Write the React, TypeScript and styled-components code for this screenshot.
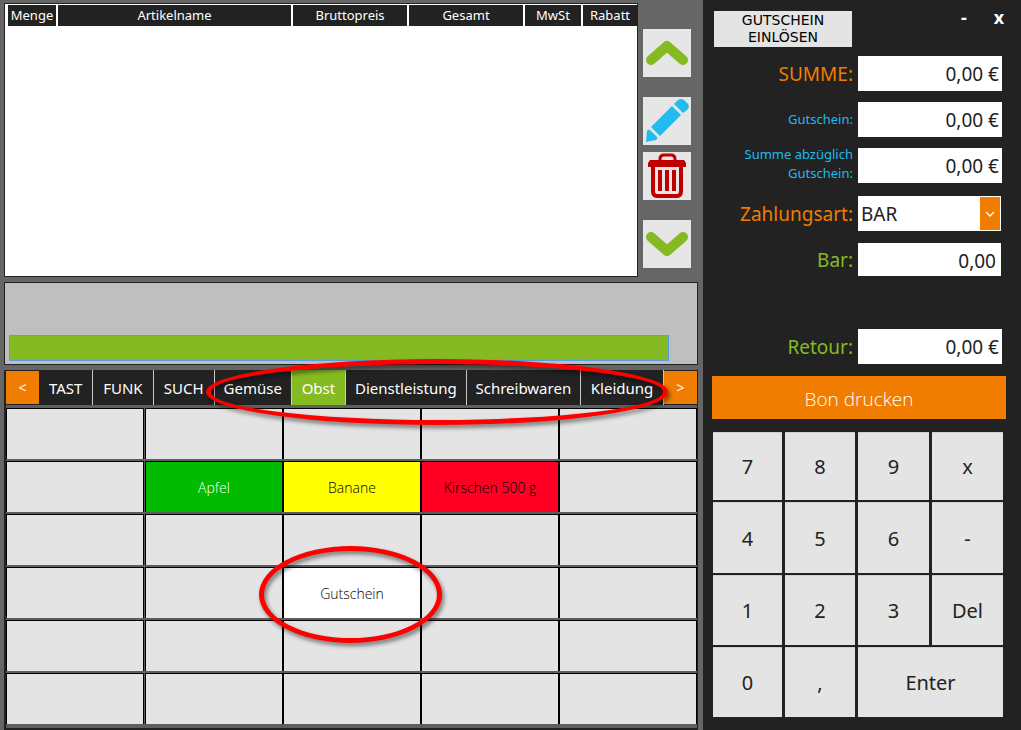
import React from "react";
import styled, { createGlobalStyle } from "styled-components";

const colors = {
  dark: "#222222",
  frame: "#666666",
  tile: "#e4e4e4",
  orange: "#f07d00",
  green: "#86ba22",
  blue: "#1cbbee",
  red: "#be0000",
};

const GlobalStyle = createGlobalStyle`
  *, *::before, *::after { box-sizing: border-box; }
  body { margin: 0; background: ${colors.dark}; }
  body, button, input, select {
    font-family: "Noto Sans", "Open Sans", sans-serif;
  }
  button, input, select { border: 0; border-radius: 0; margin: 0; padding: 0; }
  button { cursor: pointer; }
`;

const Register = styled.main`
  display: flex;
  min-height: 100vh;
  overflow: hidden;
`;

/* Left side: receipt, scan bar and article pad */

const SalesPane = styled.section`
  flex: 1;
  min-width: 0;
  display: flex;
  flex-direction: column;
  gap: 5px;
  padding: 3px 5px 0 4px;
  background: ${colors.frame};
`;

const ReceiptRow = styled.div`
  flex: 1;
  display: flex;
  gap: 5px;
  padding-right: 7px;
`;

const Receipt = styled.div`
  flex: 1;
  min-width: 0;
  min-height: 273px;
  padding: 1px 0 0 3px;
  background: #fff;
  border: 1px solid ${colors.dark};
`;

const ReceiptTable = styled.table`
  width: 100%;
  table-layout: fixed;
  border-spacing: 0;
`;

const ColumnHead = styled.th<{ $width?: number }>`
  width: ${(p) => (p.$width ? `${p.$width}px` : "auto")};
  height: 21px;
  padding: 0;
  border-right: 2px solid #fff;
  background: ${colors.dark};
  background-clip: padding-box;
  color: #fff;
  font-size: 13px;
  font-weight: 400;
  line-height: 21px;
  white-space: nowrap;
  &:last-child { border-right: 0; }
`;

const ToolColumn = styled.div`
  display: flex;
  flex-direction: column;
  padding-top: 26px;
`;

const ToolButton = styled.button<{ $gap?: number }>`
  width: 48px;
  height: 48px;
  margin-bottom: ${(p) => p.$gap ?? 0}px;
  background: #e6e6e6;
  svg { display: block; }
`;

const ScanPanel = styled.div`
  height: 83px;
  display: flex;
  align-items: flex-end;
  padding: 0 28px 3px 4px;
  background: #bfbfbf;
  border: 1px solid ${colors.dark};
`;

const ScanInput = styled.input`
  width: 100%;
  height: 26px;
  background: ${colors.green};
  border: 1px solid #569de5;
  outline: 0;
`;

const ArticlePad = styled.div`
  position: relative;
  border-left: 2px solid ${colors.dark};
  border-right: 1px solid ${colors.dark};
  border-bottom: 2px solid ${colors.dark};
`;

const TabBar = styled.nav`
  display: flex;
  height: 35px;
  background: ${colors.dark};
`;

const ScrollButton = styled.button`
  width: 33px;
  height: 33px;
  margin-top: 1px;
  background: ${colors.orange};
  color: #fff;
  font-size: 14px;
`;

const Tab = styled.button<{ $active?: boolean; $grow: number }>`
  flex: ${(p) => p.$grow} 1 0;
  min-width: 0;
  background: ${(p) => (p.$active ? colors.green : colors.dark)};
  border-right: 1px solid #c8c8c8;
  color: #fff;
  font-size: 15px;
  white-space: nowrap;
`;

const ArticleGrid = styled.div`
  display: grid;
  grid-template-columns: 139fr 138fr 138fr 138fr 138fr;
  grid-auto-rows: 51px;
  row-gap: 2px;
  padding: 3px 0 4px;
  background: #5e5e5e;
`;

const Article = styled.button<{ $bg?: string; $fg?: string }>`
  position: relative;
  background: ${(p) => p.$bg ?? colors.tile};
  border: solid #000;
  border-width: 1px 1px 0;
  color: ${(p) => p.$fg ?? "#000"};
  font-family: "Open Sans", "Noto Sans", sans-serif;
  font-size: 14px;
  font-weight: 300;
  &:nth-child(5n + 1) { margin-right: 1px; }
`;

const Marker = styled.span`
  position: absolute;
  z-index: 1;
  border: 5px solid #f00;
  border-radius: 50%;
  filter: drop-shadow(2px 3px 2px rgba(0, 0, 0, 0.5));
  pointer-events: none;
`;

const TabMarker = styled(Marker)`
  top: -11px;
  left: 200px;
  right: 29px;
  height: 66px;
`;

const ArticleMarker = styled(Marker)`
  inset: -22px -22px -25px -25px;
`;

/* Right side: totals and keypad */

const PaymentPane = styled.aside`
  width: 318px;
  display: flex;
  flex-direction: column;
  padding: 11px 15px 13px 9px;
  background: ${colors.dark};
`;

const TopBar = styled.header`
  display: flex;
  justify-content: space-between;
  align-items: flex-start;
  padding-left: 2px;
`;

const VoucherButton = styled.button`
  width: 138px;
  height: 36px;
  background: ${colors.tile};
  color: #000;
  font-family: "DejaVu Sans", sans-serif;
  font-size: 14px;
  line-height: 17px;
`;

const WindowControls = styled.div`
  display: flex;
  gap: 15px;
  margin-right: -3px;
`;

const WindowButton = styled.button`
  width: 20px;
  height: 12px;
  background: none;
  color: #fff;
  font-size: 18px;
  font-weight: 700;
  line-height: 10px;
`;

const Totals = styled.form`
  display: flex;
  flex-direction: column;
  gap: 11px;
  padding: 9px 4px 12px 0;
`;

const FieldRow = styled.div<{ $space?: number }>`
  display: flex;
  align-items: center;
  gap: 5px;
  height: 35px;
  margin-top: ${(p) => p.$space ?? 0}px;
`;

const FieldLabel = styled.label<{ $color: string; $small?: boolean }>`
  flex: 1;
  padding-top: ${(p) => (p.$small ? 0 : 2)}px;
  color: ${(p) => p.$color};
  font-size: ${(p) => (p.$small ? 13 : 19)}px;
  line-height: 19px;
  text-align: right;
`;

const TwoLineLabel = styled(FieldLabel)`
  padding-bottom: 4px;
`;

const Amount = styled.input`
  width: 144px;
  height: 100%;
  padding: 0 3px 0 0;
  background: #fff;
  color: ${colors.dark};
  font-size: 19px;
  text-align: right;
`;

const EditableAmount = styled(Amount)`
  height: 33px;
  padding: 2px 5px 0 0;
  border-right: 1px solid ${colors.dark};
`;

const SelectBox = styled.div`
  position: relative;
  width: 144px;
  height: 100%;
  padding-right: 1px;
`;

const MethodSelect = styled.select`
  width: 100%;
  height: 100%;
  padding-left: 3px;
  appearance: none;
  background: #fff;
  color: ${colors.dark};
  font-size: 19px;
`;

const SelectArrow = styled.span`
  position: absolute;
  top: 1px;
  right: 2px;
  bottom: 1px;
  width: 20px;
  display: grid;
  place-items: center;
  background: ${colors.orange};
  pointer-events: none;
`;

const PrintButton = styled.button`
  height: 43px;
  padding-top: 2px;
  background: ${colors.orange};
  color: #fff;
  font-family: "Open Sans", "Noto Sans", sans-serif;
  font-size: 19px;
  font-weight: 300;
`;

const Keypad = styled.div`
  flex: 1;
  display: grid;
  grid-template-columns: 69fr 70fr 71fr 71fr;
  grid-template-rows: 68fr 71fr 70fr 70fr;
  gap: 2px 3px;
  margin: 13px 3px 0 1px;
`;

const Key = styled.button<{ $wide?: boolean }>`
  grid-column: span ${(p) => (p.$wide ? 2 : 1)};
  min-height: 60px;
  background: ${colors.tile};
  border-top: 1px solid #cfcfcf;
  color: ${colors.dark};
  font-size: 20px;
`;

const Chevron = ({ down }: { down?: boolean }) => (
  <svg width="48" height="48" viewBox="0 0 48 48" fill="none" aria-hidden="true">
    <path
      d={down ? "M8 17 L24 31 L40 17" : "M8 31 L24 17 L40 31"}
      stroke={colors.green}
      strokeWidth="10"
      strokeLinecap="round"
      strokeLinejoin="round"
    />
  </svg>
);

const Pencil = () => (
  <svg width="48" height="48" viewBox="0 0 48 48" fill="#22bbef" aria-hidden="true">
    <path d="M3 45 L4 34 Q5 32 7 33 L14 40 Q15 42 13 43 Z" />
    <path d="M8 30 L29 9 L38 18 L17 39 Z" />
    <path d="M31 7 L35 3 Q38 1 41 3 L45 7 Q47 10 44 13 L40 16 Z" />
  </svg>
);

const Trash = () => (
  <svg width="48" height="48" viewBox="0 0 48 48" fill="none" stroke={colors.red} aria-hidden="true">
    <path d="M17 9 V7 Q17 3 21 3 H28 Q32 3 32 7 V9" strokeWidth="3" />
    <path d="M7 8 H41 L43 11 V15 H5 V11 Z" fill={colors.red} stroke="none" />
    <path d="M10 14 V39 Q10 44 14 44 H34 Q38 44 38 39 V14" strokeWidth="4" />
    <path d="M17 18 V39 M24 18 V39 M31 18 V39" strokeWidth="4" />
  </svg>
);

const columns = [
  { title: "Menge", width: 50 },
  { title: "Artikelname" },
  { title: "Bruttopreis", width: 116 },
  { title: "Gesamt", width: 116 },
  { title: "MwSt", width: 58 },
  { title: "Rabatt", width: 54 },
];

const tabs = [
  { name: "TAST", grow: 54 },
  { name: "FUNK", grow: 60 },
  { name: "SUCH", grow: 61 },
  { name: "Gemüse", grow: 77 },
  { name: "Obst", grow: 54 },
  { name: "Dienstleistung", grow: 121 },
  { name: "Schreibwaren", grow: 115 },
  { name: "Kleidung", grow: 83 },
];

const articles: Record<number, { name: string; bg: string; fg?: string; marked?: boolean }> = {
  6: { name: "Apfel", bg: "#00bb00", fg: "#fff" },
  7: { name: "Banane", bg: "#ffff00" },
  8: { name: "Kirschen 500 g", bg: "#ff0024" },
  17: { name: "Gutschein", bg: "#ffffff", marked: true },
};

const keys = ["7", "8", "9", "x", "4", "5", "6", "-", "1", "2", "3", "Del", "0", ",", "Enter"];

export default function App() {
  return (
    <>
      <GlobalStyle />
      <Register>
        <SalesPane>
          <ReceiptRow>
            <Receipt>
              <ReceiptTable>
                <thead>
                  <tr>
                    {columns.map((c) => (
                      <ColumnHead key={c.title} $width={c.width}>{c.title}</ColumnHead>
                    ))}
                  </tr>
                </thead>
              </ReceiptTable>
            </Receipt>
            <ToolColumn>
              <ToolButton $gap={20} aria-label="Nach oben"><Chevron /></ToolButton>
              <ToolButton $gap={7} aria-label="Bearbeiten"><Pencil /></ToolButton>
              <ToolButton $gap={20} aria-label="Löschen"><Trash /></ToolButton>
              <ToolButton aria-label="Nach unten"><Chevron down /></ToolButton>
            </ToolColumn>
          </ReceiptRow>
          <ScanPanel>
            <ScanInput aria-label="Eingabe" />
          </ScanPanel>
          <ArticlePad>
            <TabBar>
              <ScrollButton>&lt;</ScrollButton>
              {tabs.map((t) => (
                <Tab key={t.name} $grow={t.grow} $active={t.name === "Obst"}>{t.name}</Tab>
              ))}
              <ScrollButton>&gt;</ScrollButton>
            </TabBar>
            <TabMarker />
            <ArticleGrid>
              {Array.from({ length: 30 }, (_, i) => {
                const a = articles[i];
                return (
                  <Article key={i} $bg={a?.bg} $fg={a?.fg} aria-label={a ? undefined : "Leer"}>
                    {a?.name}
                    {a?.marked && <ArticleMarker />}
                  </Article>
                );
              })}
            </ArticleGrid>
          </ArticlePad>
        </SalesPane>

        <PaymentPane>
          <TopBar>
            <VoucherButton>GUTSCHEIN<br />EINLÖSEN</VoucherButton>
            <WindowControls>
              <WindowButton>-</WindowButton>
              <WindowButton>x</WindowButton>
            </WindowControls>
          </TopBar>
          <Totals>
            <FieldRow>
              <FieldLabel htmlFor="sum" $color={colors.orange}>SUMME:</FieldLabel>
              <Amount id="sum" readOnly value="0,00 €" />
            </FieldRow>
            <FieldRow>
              <FieldLabel htmlFor="voucher" $color={colors.blue} $small>Gutschein:</FieldLabel>
              <Amount id="voucher" readOnly value="0,00 €" />
            </FieldRow>
            <FieldRow>
              <TwoLineLabel htmlFor="net" $color={colors.blue} $small>
                Summe abzüglich<br />Gutschein:
              </TwoLineLabel>
              <Amount id="net" readOnly value="0,00 €" />
            </FieldRow>
            <FieldRow $space={2}>
              <FieldLabel htmlFor="method" $color={colors.orange}>Zahlungsart:</FieldLabel>
              <SelectBox>
                <MethodSelect id="method" defaultValue="BAR">
                  <option>BAR</option>
                </MethodSelect>
                <SelectArrow>
                  <svg width="10" height="6" viewBox="0 0 10 6" fill="none" stroke="#fff" strokeWidth="1.4" aria-hidden="true">
                    <path d="M1 1 L5 5 L9 1" />
                  </svg>
                </SelectArrow>
              </SelectBox>
            </FieldRow>
            <FieldRow>
              <FieldLabel htmlFor="cash" $color={colors.green}>Bar:</FieldLabel>
              <EditableAmount id="cash" defaultValue="0,00" />
            </FieldRow>
            <FieldRow $space={41}>
              <FieldLabel htmlFor="change" $color={colors.green}>Retour:</FieldLabel>
              <Amount id="change" readOnly value="0,00 €" />
            </FieldRow>
          </Totals>
          <PrintButton>Bon drucken</PrintButton>
          <Keypad>
            {keys.map((k) => (
              <Key key={k} $wide={k === "Enter"}>{k}</Key>
            ))}
          </Keypad>
        </PaymentPane>
      </Register>
    </>
  );
}
